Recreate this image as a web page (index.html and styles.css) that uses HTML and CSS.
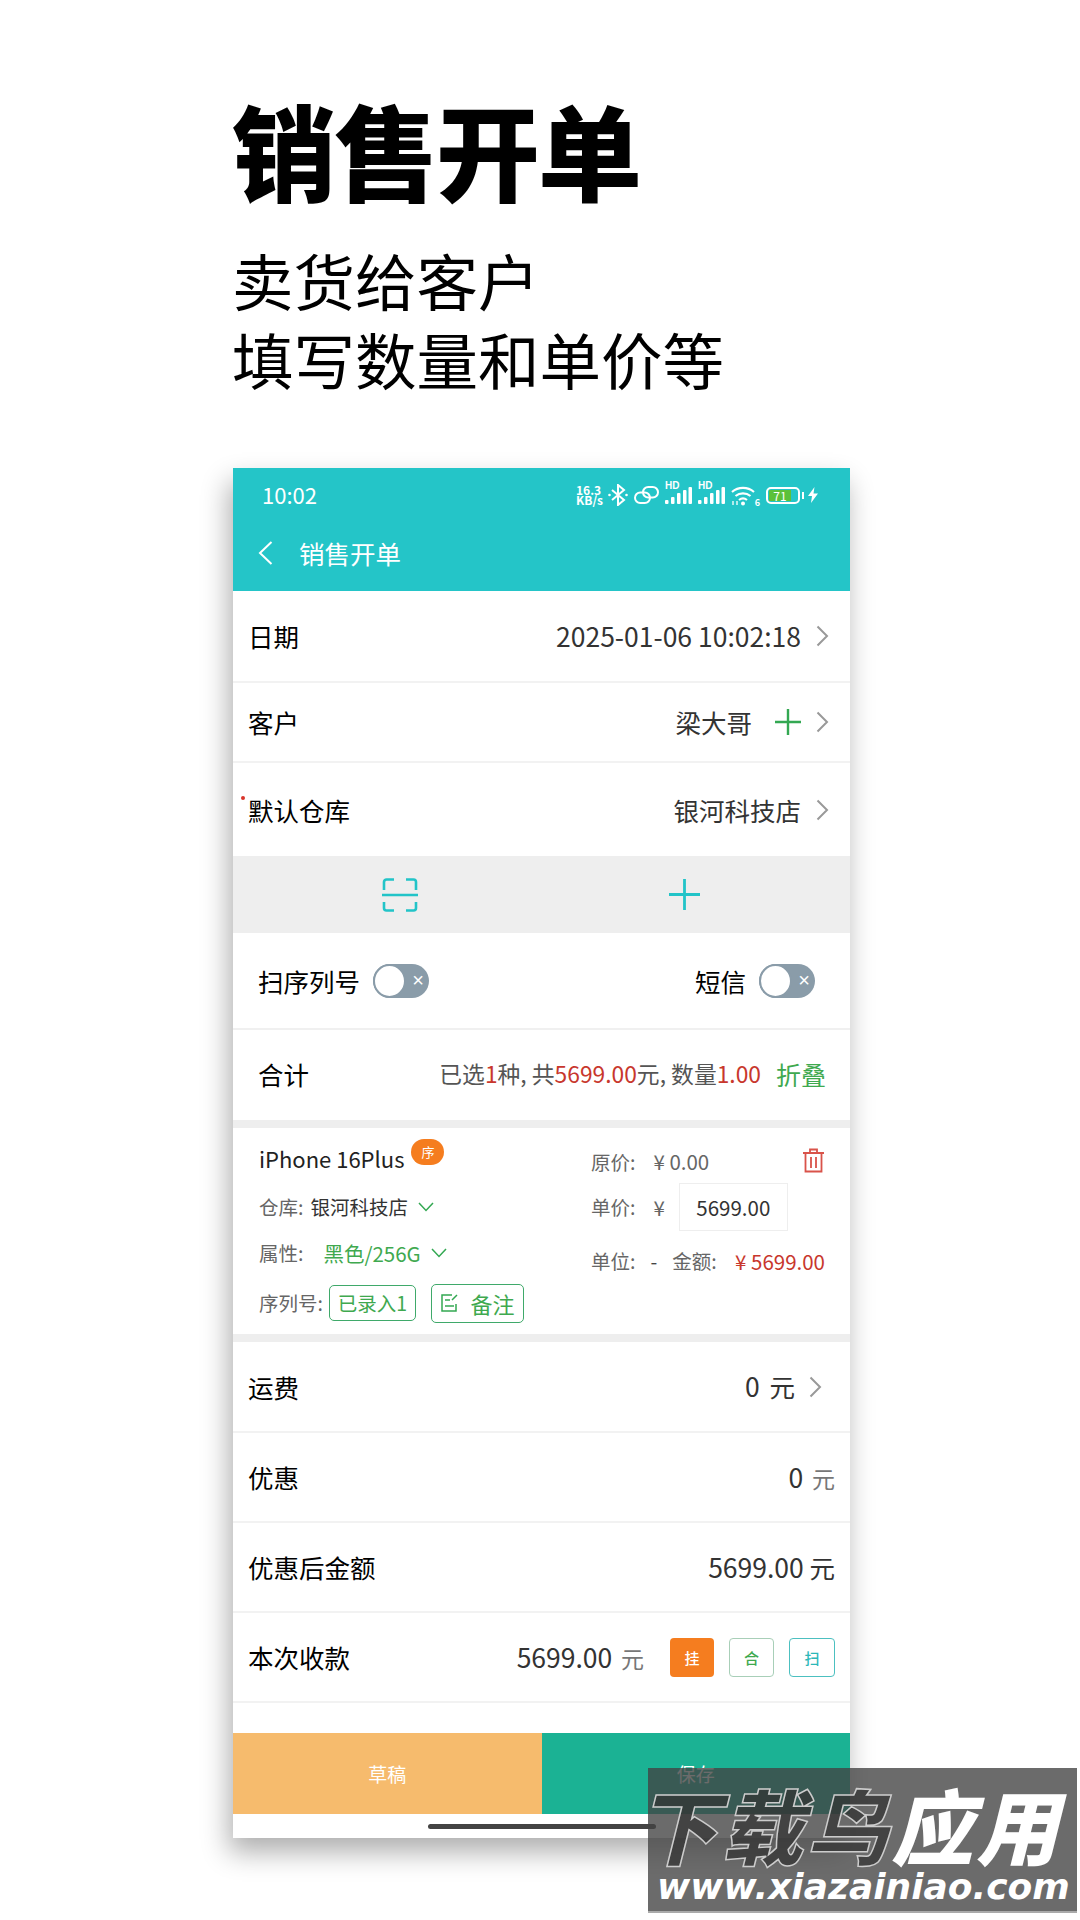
FILE: index.html
```html
<!DOCTYPE html>
<html lang="zh-CN">
<head>
<meta charset="utf-8">
<title>销售开单</title>
<link rel="stylesheet" href="styles.css">
</head>
<body>
<div class="page">
  <header class="hero">
    <h1 class="hero-title">销售开单</h1>
    <p class="hero-sub">卖货给客<span class="alt-glyph">户</span><br>填写数量和单价等</p>
  </header>

  <main class="phone">
    <div class="appbar">
      <div class="status">
        <span class="clock">10:02</span>
        <div class="status-icons">
          <span class="speed">16.3<br>KB/s</span>
          <svg class="si" width="20" height="22" viewBox="0 0 20 22"><path d="M4 6l12 10-6 5V1l6 5L4 16" fill="none" stroke="#fff" stroke-width="2"/><circle cx="1.500" cy="11" r="1.300" fill="#fff"/><circle cx="18.500" cy="11" r="1.300" fill="#fff"/></svg>
          <svg class="si" width="25" height="18" viewBox="0 0 25 18"><g fill="none" stroke="#fff" stroke-width="2"><rect x="1" y="6.500" width="15" height="10.500" rx="5.250"/><rect x="9" y="1" width="15" height="10.500" rx="5.250"/></g></svg>
          <span class="signal"><span class="hd">HD</span><svg width="27" height="18" viewBox="0 0 27 18"><g fill="#fff"><rect x="0" y="13" width="3.500" height="4" rx="1"/><rect x="6" y="10" width="3.500" height="7" rx="1"/><rect x="12" y="6" width="3.500" height="11" rx="1"/><rect x="18" y="3" width="3.500" height="14" rx="1"/><rect x="23.500" y="0" width="3.500" height="17" rx="1"/></g></svg></span>
          <span class="signal"><span class="hd">HD</span><svg width="27" height="18" viewBox="0 0 27 18"><g fill="#fff"><rect x="0" y="13" width="3.500" height="4" rx="1"/><rect x="6" y="10" width="3.500" height="7" rx="1"/><rect x="12" y="6" width="3.500" height="11" rx="1"/><rect x="18" y="3" width="3.500" height="14" rx="1"/><rect x="23.500" y="0" width="3.500" height="17" rx="1"/></g></svg></span>
          <span class="wifi">
            <svg width="26" height="21" viewBox="0 0 26 21"><g fill="none" stroke="#fff" stroke-width="2.200"><path d="M1 7a17 17 0 0 1 22 0"/><path d="M4.500 11a12 12 0 0 1 15 0"/><path d="M8 15a6.500 6.500 0 0 1 8 0"/></g><circle cx="12" cy="18.500" r="2" fill="#fff"/><path d="M2 16v4M6 16v4" stroke="#fff" stroke-width="1.300"/></svg>
            <span class="wifi-num">6</span>
          </span>
          <span class="battery"><span class="battery-fill">71</span></span>
          <svg class="si bolt" width="10" height="16" viewBox="0 0 10 16"><path d="M6.500 0L0 9h4l-1 7 7-9.500H5.500z" fill="#fff"/></svg>
        </div>
      </div>
      <div class="navbar">
        <svg class="back" width="15" height="24" viewBox="0 0 15 24"><path d="M13.500 1L2 12l11.500 11" fill="none" stroke="#fff" stroke-width="2"/></svg>
        <span class="nav-title">销售开单</span>
      </div>
    </div>

    <section class="rows-top">
      <div class="row row-date">
        <span class="label">日期</span>
        <span class="value num">2025-01-06 10:02:18</span>
        <svg class="chev" width="13" height="22" viewBox="0 0 13 22"><path d="M1.500 1.500L11 11l-9.500 9.500" fill="none" stroke="#999" stroke-width="2"/></svg>
      </div>
      <div class="row row-cust">
        <span class="label">客户</span>
        <span class="value">梁大哥</span>
        <svg class="plus-green" width="26" height="26" viewBox="0 0 26 26"><path d="M0 13h26M13 0v26" stroke="#33a852" stroke-width="2.400"/></svg>
        <svg class="chev" width="13" height="22" viewBox="0 0 13 22"><path d="M1.500 1.500L11 11l-9.500 9.500" fill="none" stroke="#999" stroke-width="2"/></svg>
      </div>
      <div class="row row-store">
        <span class="label required">默认仓库</span>
        <span class="value">银河科技店</span>
        <svg class="chev" width="13" height="22" viewBox="0 0 13 22"><path d="M1.500 1.500L11 11l-9.500 9.500" fill="none" stroke="#999" stroke-width="2"/></svg>
      </div>
    </section>

    <section class="band">
      <div class="band-cell band-scan">
        <svg width="36" height="34" viewBox="0 0 36 34"><path d="M2 12V4a2.500 2.500 0 0 1 2.500-2.500H12M24 1.500h7.500A2.500 2.500 0 0 1 34 4v8M34 24v6a2.500 2.500 0 0 1-2.500 2.500H24M12 32.500H4.500A2.500 2.500 0 0 1 2 30v-6M0 17h36" fill="none" stroke="#22c4c8" stroke-width="2.600"/></svg>
      </div>
      <div class="band-cell band-add">
        <svg width="31" height="31" viewBox="0 0 31 31"><path d="M0 15.500h31M15.500 0v31" stroke="#22c4c8" stroke-width="2.800"/></svg>
      </div>
    </section>

    <section class="switches">
      <div class="switch-group">
        <span class="label">扫序列号</span>
        <span class="toggle"><span class="toggle-x">×</span><span class="toggle-thumb"></span></span>
      </div>
      <div class="switch-group">
        <span class="label">短信</span>
        <span class="toggle"><span class="toggle-x">×</span><span class="toggle-thumb"></span></span>
      </div>
    </section>

    <section class="summary">
      <span class="label">合计</span>
      <span class="summary-text">已选<b class="red">1</b>种, 共<b class="red">5699.00</b>元, 数量<b class="red">1.00</b></span>
      <span class="fold">折叠</span>
    </section>

    <section class="item">
      <div class="item-left">
        <div class="item-name-row"><span class="item-name">iPhone 16Plus</span><span class="badge">序</span></div>
        <div class="meta-row"><span class="muted">仓库:</span><span class="store-name">银河科技店</span>
          <svg class="drop" width="16" height="10" viewBox="0 0 16 10"><path d="M1 1l7 7.500L15 1" fill="none" stroke="#33a852" stroke-width="1.500"/></svg></div>
        <div class="meta-row"><span class="muted attr-label">属性:</span><span class="green">黑色/256G</span>
          <svg class="drop" width="16" height="10" viewBox="0 0 16 10"><path d="M1 1l7 7.500L15 1" fill="none" stroke="#33a852" stroke-width="1.500"/></svg></div>
        <div class="meta-row"><span class="muted">序列号:</span>
          <span class="chip">已录入1</span>
          <span class="chip chip-note">
            <svg width="20" height="20" viewBox="0 0 20 20"><path d="M12 2H2v16h14v-7M5 7h5M5 13h9M17 2l-5 5" fill="none" stroke="#33a852" stroke-width="1.500"/></svg>
            备注</span>
        </div>
      </div>
      <div class="item-right">
        <div class="price-row"><span class="muted">原价:</span><span class="yen-val">¥ 0.00</span>
          <svg class="trash" width="23" height="25" viewBox="0 0 23 25"><path d="M1 5h21M8 5V1.500h7V5M3.500 5v18.500h16V5M9 9v11M14 9v11" fill="none" stroke="#d9534a" stroke-width="1.800"/></svg></div>
        <div class="price-row"><span class="muted">单价:</span><span class="yen-val">¥</span><span class="price-input">5699.00</span></div>
        <div class="price-row"><span class="muted">单位:</span><span class="dash">-</span><span class="muted">金额:</span><span class="amount">¥ 5699.00</span></div>
      </div>
    </section>

    <section class="rows-bottom">
      <div class="row row-low">
        <span class="label">运费</span>
        <span class="value"><span class="num num-gap">0</span> 元</span>
        <svg class="chev chev-low" width="13" height="22" viewBox="0 0 13 22"><path d="M1.500 1.500L11 11l-9.500 9.500" fill="none" stroke="#999" stroke-width="2"/></svg>
      </div>
      <div class="row row-low">
        <span class="label">优惠</span>
        <span class="value"><span class="num">0</span> <i class="unit">元</i></span>
      </div>
      <div class="row row-low">
        <span class="label">优惠后金额</span>
        <span class="value"><span class="num">5699.00</span> 元</span>
      </div>
      <div class="row row-low">
        <span class="label">本次收款</span>
        <span class="value"><span class="num">5699.00</span> <i class="unit">元</i></span>
        <span class="pay-btns">
          <span class="pay pay-orange">挂</span>
          <span class="pay pay-green">合</span>
          <span class="pay pay-teal">扫</span>
        </span>
      </div>
    </section>

    <section class="actions">
      <span class="action action-draft">草稿</span>
      <span class="action action-save">保存</span>
    </section>
    <div class="home-area"><span class="home-bar"></span></div>
  </main>

  <aside class="watermark">
    <div class="wm-cn"><span class="wm-outline">下载鸟</span>应用</div>
    <div class="wm-url">www.xiazainiao.com</div>
  </aside>
</div>
</body>
</html>
```

FILE: styles.css
```css
* { box-sizing: border-box; }
html, body { margin: 0; padding: 0; background: #fff; }
body { font-family: "Noto Sans CJK SC", "Noto Sans", sans-serif; color: #111; }
.page { position: relative; width: 1080px; height: 1920px; overflow: hidden; }

.hero { height: 468px; padding: 98px 0 0 232px; color: #000; }
.hero-title { margin: 0; font-size: 104px; line-height: 102px; font-weight: 800; letter-spacing: -2px; }
.hero-sub { margin: 40px 0 0; font-size: 61.500px; line-height: 79px; font-weight: 400; }
.alt-glyph { font-family: "Noto Sans CJK KR", sans-serif; }

.phone { width: 617px; height: 1370px; margin-left: 233px; background: #fff; box-shadow: -4px 14px 26px rgba(0,0,0,.32); display: flex; flex-direction: column; }

.appbar { height: 123px; background: #24c5c8; color: #fff; flex: none; }
.status { height: 52px; padding: 0 32px 0 29px; display: flex; align-items: center; justify-content: space-between; }
.clock { font-size: 22px; line-height: 1; }
.status-icons { display: flex; align-items: center; gap: 6px; margin-top: 2px; }
.speed { font-size: 12px; line-height: 10px; font-weight: 700; width: 26px; white-space: nowrap; }
.signal { position: relative; display: flex; width: 27px; padding-top: 2px; }
.hd { position: absolute; left: 0; top: -4px; font-family: "Liberation Sans", sans-serif; font-size: 10px; line-height: 10px; font-weight: 700; background: #24c5c8; padding-right: 1px; }
.wifi { position: relative; display: block; width: 26px; height: 21px; }
.wifi svg { display: block; }
.wifi-num { position: absolute; right: -3px; bottom: -2px; font-size: 9px; line-height: 10px; font-weight: 700; }
.battery { position: relative; display: block; width: 34px; height: 17px; border: 2px solid #fff; border-radius: 5px; padding: 1px; margin-left: 3px; }
.battery::after { content: ""; position: absolute; right: -6px; top: 3px; width: 2px; height: 7px; background: #fff; }
.battery-fill { display: block; width: 22px; height: 11px; background: #5cc13a; font-size: 12px; line-height: 11px; text-align: center; color: #fff; }
.bolt { margin-left: 2px; }

.navbar { height: 69px; padding: 0 0 4px 25px; display: flex; align-items: center; gap: 26px; }
.nav-title { font-size: 25.500px; line-height: 1; }

.rows-top, .rows-bottom { flex: none; }
.row { display: flex; align-items: center; padding: 0 21px 0 15px; border-bottom: 2px solid #f2f2f2; }
.row-date { height: 92px; }
.row-cust { height: 80px; }
.row-store { height: 93px; border-bottom: 0; }
.row-low { height: 90px; padding-right: 15px; }
.rows-bottom .row:first-child { height: 91px; }
.label { font-size: 25.500px; line-height: 1.300; color: #000; }
.value { margin-left: auto; font-size: 25.500px; line-height: 1.300; color: #333; }
.num { font-size: 26.500px; }
.num-gap { margin-right: 4px; }
.chev { margin-left: 15px; flex: none; }
.chev-low { margin-left: 14px; margin-right: 13px; }
.plus-green { margin-left: 23px; flex: none; }
.row-cust .chev { margin-left: 15px; }
.required { position: relative; }
.required::before { content: ""; position: absolute; left: -7px; top: 3px; width: 4px; height: 4px; border-radius: 50%; background: #d9342b; }
.unit { font-style: normal; color: #777; font-size: 23px; margin-left: 3px; }

.band { height: 77px; background: #eee; display: flex; flex: none; }
.band-cell { flex: 1; display: flex; align-items: center; justify-content: center; }
.band-scan { padding: 1px 0 0 25px; }
.band-add { padding-right: 23px; }

.switches { height: 97px; padding: 0 35px 0 25px; display: flex; align-items: center; justify-content: space-between; border-bottom: 2px solid #f0f0f0; flex: none; }
.switch-group { display: flex; align-items: center; gap: 13px; }
.toggle { position: relative; display: block; width: 56px; height: 34px; border-radius: 17px; background: #8a9ca9; }
.toggle-thumb { position: absolute; left: 0; top: 0; width: 33px; height: 34px; border-radius: 50%; background: #fff; border: 2px solid #8a9ca9; }
.toggle-x { position: absolute; right: 5px; top: 0; font-size: 20px; line-height: 33px; color: #fff; font-family: "Liberation Sans", sans-serif; }

.summary { height: 98px; padding: 0 24px 2px 25px; display: flex; align-items: center; border-bottom: 8px solid #eee; flex: none; }
.summary-text { margin-left: auto; font-size: 22.800px; line-height: 1.300; color: #555; }
.red { color: #c8372d; font-weight: 400; }
.fold { margin-left: 15px; font-size: 25px; line-height: 1.300; color: #3fa94f; }

.item { height: 214px; padding: 6px 25px 0 26px; display: flex; border-bottom: 8px solid #eee; flex: none; }
.item-left { width: 332px; display: grid; grid-template-rows: 48px 50px 42px 58px; }
.item-right { flex: 1; display: grid; grid-template-rows: 43px 48px 60px; padding-top: 6px; }
.item-name-row { display: flex; align-items: center; }
.item-name { font-size: 22px; line-height: 1.300; color: #222; }
.badge { margin: -12px 0 0 7px; width: 33px; height: 26px; border-radius: 13px; background: #f57d1f; color: #fff; font-size: 13px; line-height: 26px; text-align: center; }
.meta-row { display: flex; align-items: center; font-size: 19.500px; line-height: 1.300; color: #333; }
.muted { color: #666; font-size: 19.500px; line-height: 1.300; }
.store-name { margin-left: 7px; }
.attr-label { margin-right: 20px; }
.green { color: #3fa94f; font-size: 20.500px; }
.drop { margin-left: 10px; }
.chip { display: inline-flex; align-items: center; justify-content: center; gap: 10px; width: 87px; height: 36px; margin-left: 6px; border: 1.500px solid #3fa96a; border-radius: 5px; color: #3fa94f; font-size: 19.500px; }
.chip-note { width: 93px; height: 39px; margin-left: 15px; font-size: 22px; }

.price-row { display: flex; align-items: center; font-size: 19.500px; line-height: 1.300; }
.yen-val { margin-left: 18px; color: #666; font-size: 20.500px; }
.price-input { margin-left: 14px; width: 109px; height: 48px; border: 1.500px solid #eee; display: flex; align-items: center; justify-content: center; font-size: 20.500px; color: #333; }
.trash { margin-left: auto; margin-top: -2px; }
.dash { margin: 0 15px; color: #444; }
.amount { margin-left: auto; color: #c8372d; font-size: 20.500px; }

.pay-btns { display: flex; gap: 15px; margin-left: 26px; }
.pay { width: 45px; height: 39px; border-radius: 4px; display: flex; align-items: center; justify-content: center; font-size: 15px; font-weight: 500; }
.pay-orange { background: #f57d1f; color: #fff; width: 44px; }
.pay-green { border: 1.500px solid #a8cfb8; color: #3fa94f; }
.pay-teal { border: 1.500px solid #4cc0c0; color: #2cb8b8; width: 46px; }

.actions { margin-top: 30px; height: 81px; display: flex; flex: none; }
.action { flex: 1; display: flex; align-items: center; justify-content: center; color: #fff; font-size: 19px; }
.action-draft { background: #f6bb6d; }
.action-save { background: #1bb294; }
.home-area { flex: 1; display: flex; align-items: center; justify-content: center; }
.home-bar { display: block; width: 228px; height: 5px; border-radius: 3px; background: #444; }

.watermark { position: absolute; left: 648px; top: 1768px; width: 429px; height: 145px; background: rgba(66,66,66,.785); color: #fff; overflow: hidden; border-bottom: 2px solid #aaa; }
.wm-cn { margin: 18px 0 0 -12px; font-size: 82px; line-height: 76px; font-weight: 800; font-style: italic; letter-spacing: 3px; white-space: nowrap; }
.wm-outline { color: rgba(50,50,50,.7); -webkit-text-stroke: 1.500px #ccc; }
.wm-url { margin: 8px 0 0 9px; font-family: "DejaVu Sans", sans-serif; font-weight: 700; font-style: italic; font-size: 36px; line-height: 34px; white-space: nowrap; }
```
